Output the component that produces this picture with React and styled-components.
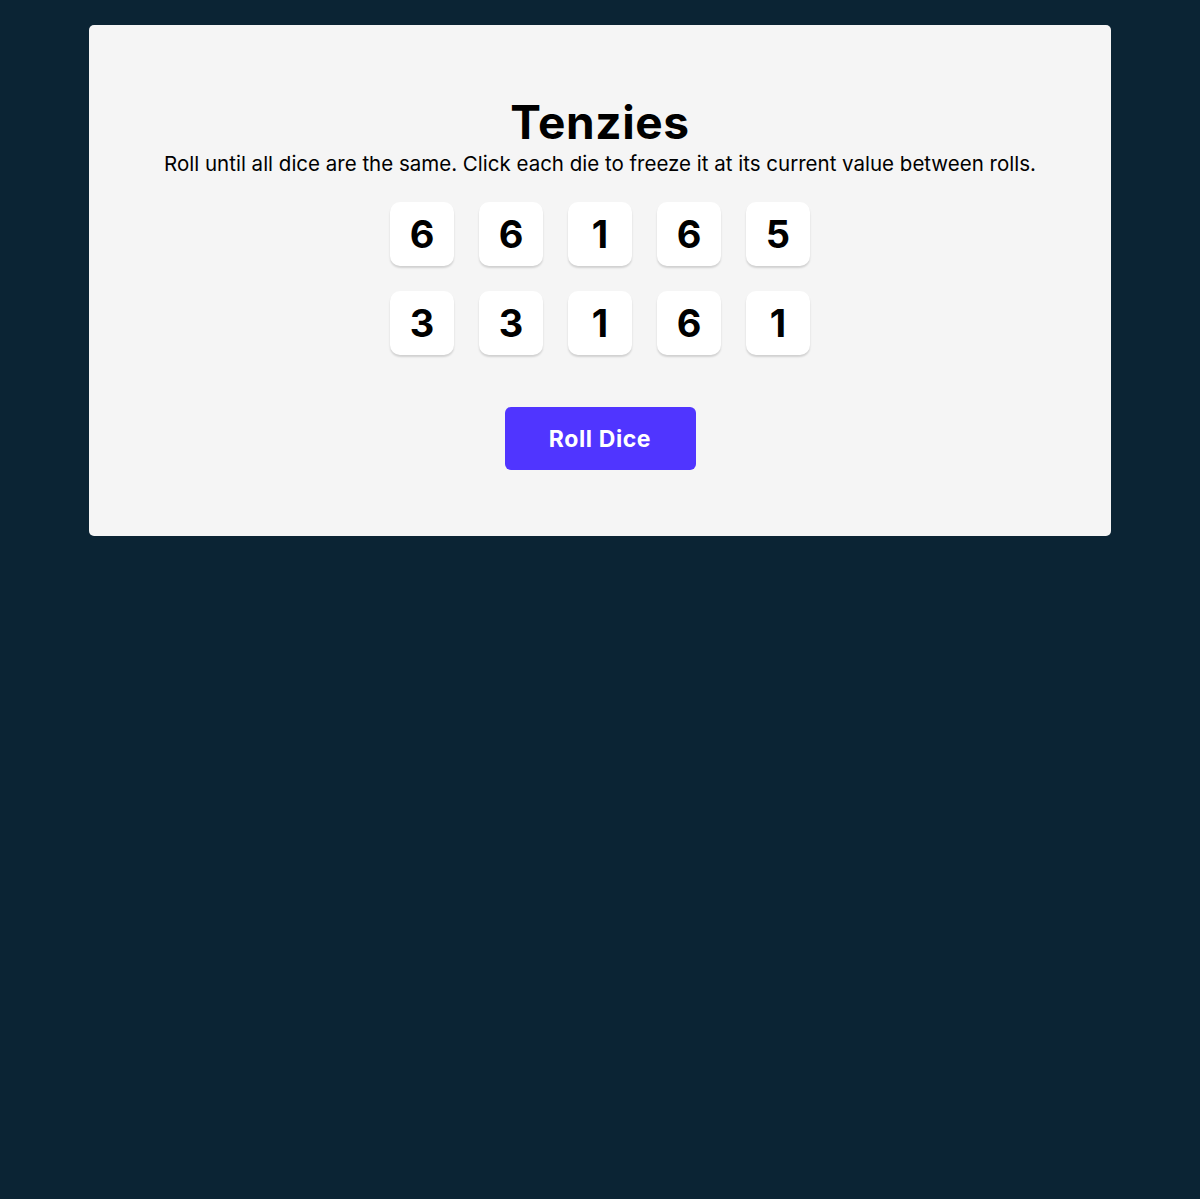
import styled, { createGlobalStyle } from "styled-components"

const Global = createGlobalStyle`
    html, body {
        margin: 0;
        padding: 0;
        background-color: #0B2434;
        min-height: 100%;
    }
    body {
        font-family: Inter, "Noto Sans", sans-serif;
        padding: 25px 89px;
        box-sizing: border-box;
        min-height: 1199px;
    }
`

const Main = styled.main`
    background-color: #F5F5F5;
    border-radius: 5px;
    height: 511px;
    box-sizing: border-box;
    display: flex;
    flex-direction: column;
    align-items: center;
    padding-top: 69px;

    .title {
        margin: 0;
        font-family: Inter, sans-serif;
        font-size: 46px;
        font-weight: 700;
        line-height: 56px;
        letter-spacing: 0.6px;
        color: #000;
    }
    .instructions {
        margin: 0;
        font-family: Inter, sans-serif;
        font-size: 20.5px;
        font-weight: 400;
        line-height: 28px;
        color: #000;
    }
`

const DiceGrid = styled.div`
    display: grid;
    grid-template-columns: repeat(5, 64px);
    grid-auto-rows: 64px;
    column-gap: 25px;
    row-gap: 25px;
    margin-top: 24px;
`

const Die = styled.button`
    border: none;
    border-radius: 10px;
    background-color: ${props => props.held ? "#59E391" : "#FFFFFF"};
    box-shadow: 0 2px 2px rgba(0, 0, 0, 0.15);
    font-family: Inter, sans-serif;
    font-size: 38px;
    font-weight: 700;
    color: #000;
    cursor: pointer;
    padding: 0;
    display: flex;
    align-items: center;
    justify-content: center;
`

const RollButton = styled.button`
    margin-top: 52px;
    width: 191px;
    height: 63px;
    border: none;
    border-radius: 6px;
    background-color: #5035FF;
    color: #FFFFFF;
    font-family: Inter, sans-serif;
    font-size: 23px;
    font-weight: 700;
    letter-spacing: 0.6px;
    cursor: pointer;
`

const dice = [6, 6, 1, 6, 5, 3, 3, 1, 6, 1]

export default function App() {
    return (
        <>
            <Global />
            <Main>
                <h1 className='title'>Tenzies</h1>
                <p className='instructions'>
                    Roll until all dice are the same. Click each die to freeze it at its current value between rolls.
                </p>
                <DiceGrid>
                    {dice.map((value, i) => (
                        <Die key={i}>{value}</Die>
                    ))}
                </DiceGrid>
                <RollButton>Roll Dice</RollButton>
            </Main>
        </>
    )
}
